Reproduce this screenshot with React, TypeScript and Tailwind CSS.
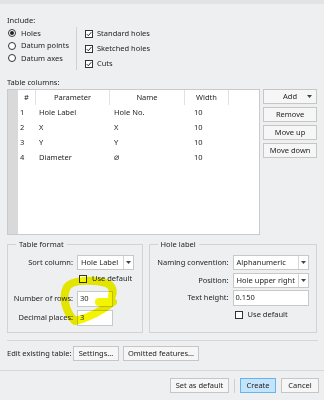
import React from 'react';

const rows = [
  { n: '1', param: 'Hole Label', name: 'Hole No.', width: '10' },
  { n: '2', param: 'X', name: 'X', width: '10' },
  { n: '3', param: 'Y', name: 'Y', width: '10' },
  { n: '4', param: 'Diameter', name: '⌀', width: '10' },
];

const Radio = ({ on }: { on?: boolean }) => (
  <span className="flex h-[8px] w-[8px] items-center justify-center rounded-full border border-[#333] bg-white">
    {on && <span className="h-[4px] w-[4px] rounded-full bg-[#222]" />}
  </span>
);

const Check = ({ on }: { on?: boolean }) => (
  <span className="flex h-[8px] w-[8px] items-center justify-center border border-[#333] bg-white">
    {on && (
      <svg width="6" height="6" viewBox="0 0 6 6">
        <polyline points="0.8,3.2 2.3,4.7 5.3,1.2" fill="none" stroke="#222" strokeWidth="1" />
      </svg>
    )}
  </span>
);

const Btn = ({ children, className = '' }: { children: React.ReactNode; className?: string }) => (
  <div className={`flex h-[15px] items-center justify-center whitespace-nowrap border border-[#c6c6c6] bg-[#f6f6f6] ${className}`}>
    {children}
  </div>
);

const Arrow = () => (
  <svg width="5" height="3" viewBox="0 0 5 3">
    <polygon points="0,0 5,0 2.5,3" fill="#444" />
  </svg>
);

const Dropdown = ({ value, w }: { value: string; w: string }) => (
  <div className={`flex h-[15px] items-stretch border border-[#c8c8c8] bg-white ${w}`}>
    <span className="flex flex-1 items-center overflow-hidden whitespace-nowrap pl-[3px]">{value}</span>
    <span className="flex w-[10px] items-center justify-center border-l border-[#d4d4d4]">
      <Arrow />
    </span>
  </div>
);

const Field = ({ value, w }: { value: string; w: string }) => (
  <div className={`flex h-[16px] items-center border border-[#c8c8c8] bg-white pl-[2px] ${w}`}>{value}</div>
);

export default function App() {
  return (
    <div className="relative h-[400px] w-[324px] overflow-hidden bg-[#eeeff1] font-['Noto_Sans',sans-serif] text-[7.5px] text-[#1e1e1e]">
      <div className="h-[4px] bg-[#e2e3e5]" />

      <div className="px-[7px] pt-[10px]">
        <div className="leading-[12px]">Include:</div>
        <div className="flex">
          <div className="flex w-[69px] flex-col pt-[1px]">
            {['Holes', 'Datum points', 'Datum axes'].map((t, i) => (
              <div key={t} className="flex h-[12.5px] items-center gap-[5px] pl-[1px]">
                <Radio on={i === 0} />
                <span>{t}</span>
              </div>
            ))}
          </div>
          <div className="mt-[1px] h-[43px] w-px bg-[#d0d0d0]" />
          <div className="flex flex-col pl-[8px]">
            {['Standard holes', 'Sketched holes', 'Cuts'].map((t) => (
              <div key={t} className="flex h-[15px] items-center gap-[4px]">
                <Check on />
                <span>{t}</span>
              </div>
            ))}
          </div>
        </div>

        <div className="mt-[5px] leading-[12px]">Table columns:</div>
        <div className="mt-px flex">
          <div className="flex h-[146px] w-[254px] border border-[#c9cacc] bg-white">
            <div className="w-[10px] bg-[#d9d9d9]" />
            <div className="flex flex-1 flex-col">
              <div className="flex h-[15px] items-center">
                <span className="flex h-full w-[18px] items-center justify-center border-r border-[#e2e2e2]">#</span>
                <span className="flex h-full w-[74px] items-center justify-center border-r border-[#e2e2e2]">Parameter</span>
                <span className="flex h-full w-[75px] items-center justify-center border-r border-[#e2e2e2]">Name</span>
                <span className="flex h-full w-[44px] items-center justify-center border-r border-[#e2e2e2]">Width</span>
              </div>
              {rows.map((r) => (
                <div key={r.n} className="flex h-[15px] items-center">
                  <span className="w-[18px] pl-[2px]">{r.n}</span>
                  <span className="w-[74px] pl-[3px]">{r.param}</span>
                  {r.name === '⌀' ? (
                    <span className="w-[75px] pl-[4px] font-['DejaVu_Sans',sans-serif] text-[9px] italic leading-[9px]">{r.name}</span>
                  ) : (
                    <span className="w-[75px] pl-[4px]">{r.name}</span>
                  )}
                  <span className="w-[44px] pl-[9px]">{r.width}</span>
                </div>
              ))}
            </div>
          </div>
          <div className="ml-[3px] flex w-[54px] flex-col gap-[3px]">
            <Btn className="relative">
              Add
              <span className="absolute right-[4px] top-[5px] flex">
                <Arrow />
              </span>
            </Btn>
            <Btn>Remove</Btn>
            <Btn>Move up</Btn>
            <Btn>Move down</Btn>
          </div>
        </div>

        <div className="mt-[3px] flex gap-[6px]">
          <fieldset className="h-[95px] w-[136px] border border-[#d3d3d3]">
            <legend className="ml-[8px] px-[3px] leading-[12px]">Table format</legend>
            <div className="mt-[5px] flex items-center">
              <span className="w-[65px] whitespace-nowrap text-right">Sort column:</span>
              <span className="ml-[4px]">
                <Dropdown value="Hole Label" w="w-[57px]" />
              </span>
            </div>
            <div className="mt-[2px] flex h-[13px] items-center gap-[5px] pl-[71px]">
              <Check />
              <span>Use default</span>
            </div>
            <div className="mt-[6px] flex items-center">
              <span className="w-[65px] whitespace-nowrap text-right">Number of rows:</span>
              <span className="ml-[4px]">
                <Field value="30" w="w-[36px]" />
              </span>
            </div>
            <div className="mt-[3px] flex items-center">
              <span className="w-[65px] whitespace-nowrap text-right">Decimal places:</span>
              <span className="ml-[4px]">
                <Field value="3" w="w-[36px]" />
              </span>
            </div>
          </fieldset>

          <fieldset className="h-[95px] w-[169px] border border-[#d3d3d3]">
            <legend className="ml-[8px] px-[3px] leading-[12px]">Hole label</legend>
            <div className="mt-[5px] flex items-center">
              <span className="w-[79px] whitespace-nowrap text-right">Naming convention:</span>
              <span className="ml-[4px]">
                <Dropdown value="Alphanumeric" w="w-[76px]" />
              </span>
            </div>
            <div className="mt-[3px] flex items-center">
              <span className="w-[79px] text-right">Position:</span>
              <span className="ml-[4px]">
                <Dropdown value="Hole upper right" w="w-[76px]" />
              </span>
            </div>
            <div className="mt-[2px] flex items-center">
              <span className="w-[79px] text-right">Text height:</span>
              <span className="ml-[4px]">
                <Field value="0.150" w="w-[76px]" />
              </span>
            </div>
            <div className="mt-[2px] flex h-[14px] items-center gap-[5px] pl-[85px]">
              <Check />
              <span>Use default</span>
            </div>
          </fieldset>
        </div>

        <div className="mt-[7px] h-px w-[311px] bg-[#d6d6d6]" />
        <div className="mt-[5px] flex h-[15px] items-center">
          <span className="w-[66px] whitespace-nowrap">Edit existing table:</span>
          <Btn className="w-[46px]">Settings...</Btn>
          <Btn className="ml-[4px] w-[76px]">Omitted features...</Btn>
        </div>
      </div>

      <div className="mt-[9px] h-px bg-[#d8d8d8]" />
      <div className="mt-[7px] flex items-center justify-end pr-[5px]">
        <Btn className="w-[59px]">Set as default</Btn>
        <div className="mx-[5px] h-[14px] w-px bg-[#cfcfcf]" />
        <div className="flex h-[15px] w-[36px] items-center justify-center border border-[#66b4ec] bg-[#c3e4fb]">
          Create
        </div>
        <Btn className="ml-[5px] w-[38px]">Cancel</Btn>
      </div>

      <svg className="pointer-events-none absolute left-0 top-0 mix-blend-multiply" width="324" height="400" viewBox="0 0 324 400">
        <path
          d="M112 296 C 114 290, 112 285, 106 283 C 92 279, 72 280, 67 287 C 62 296, 65 312, 75 321 C 88 318, 103 310, 113 302 L 99 302"
          fill="none"
          stroke="#f4f400"
          strokeWidth="8"
          strokeLinecap="round"
          strokeLinejoin="round"
        />
      </svg>
    </div>
  );
}
